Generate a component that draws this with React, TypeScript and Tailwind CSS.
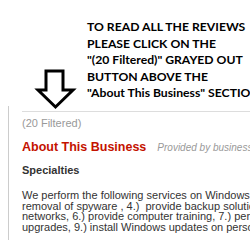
import React from "react";

const noteLines = [
	"TO READ ALL THE REVIEWS",
	"PLEASE CLICK ON THE",
	"\"(20 Filtered)\" GRAYED OUT",
	"BUTTON ABOVE THE",
	"\"About This Business\" SECTION",
];

const specialties = [
	"We perform the following services on Windows based computers: 1.)",
	"removal of spyware , 4.)  provide backup solutions, 5.) setup home",
	"networks, 6.) provide computer training, 7.) perform hardware",
	"upgrades, 9.) install Windows updates on personal computers",
];

const DownArrow: React.FC = () => (
	<svg width="38" height="40" viewBox="0 0 38 40" className="block overflow-visible">
		<polygon
			points="10,2 27,2 27,21 37,21 19.5,38 2,21 10,21"
			fill="white"
			stroke="black"
			strokeWidth={3}
			strokeLinejoin="miter"
		/>
	</svg>
);

const App: React.FC = () => {
	return (
		<div className="w-[250px] h-[250px] overflow-hidden bg-white">
			{/* Annotation over the page */}
			<div className="flex h-[106px]">
				<div className="w-[87px] flex-none pt-[69px] pl-[36px]">
					<DownArrow />
				</div>
				<div className="pt-[19px] font-['Lato',sans-serif] font-bold text-[12.2px] leading-[16.5px] text-black whitespace-nowrap">
					{noteLines.map((line) => (
						<div key={line}>{line}</div>
					))}
				</div>
			</div>

			{/* Business section */}
			<div className="ml-[8px] h-[134px] border-l border-[#cccccc] pl-[13px] pt-[5px] font-['Liberation_Sans',Arial,sans-serif] whitespace-nowrap">
				<div className="border-t border-[#dddddd]" />
				<div className="mt-[5px] text-[11px] leading-[13px] text-[#999999]">
					(20 Filtered)
				</div>
				<div className="mt-[10px] flex items-baseline">
					<h2 className="text-[12.5px] leading-[15px] font-bold text-[#c41200]">
						About This Business
					</h2>
					<span className="ml-[11px] text-[10px] italic text-[#999999]">
						Provided by business
					</span>
				</div>
				<h3 className="mt-[9px] text-[11px] leading-[13px] font-bold text-[#333333]">
					Specialties
				</h3>
				<div className="mt-[13px] text-[11px] leading-[10.7px] text-[#333333] whitespace-pre">
					{specialties.map((line) => (
						<div key={line}>{line}</div>
					))}
				</div>
			</div>
		</div>
	);
};

export default App;
